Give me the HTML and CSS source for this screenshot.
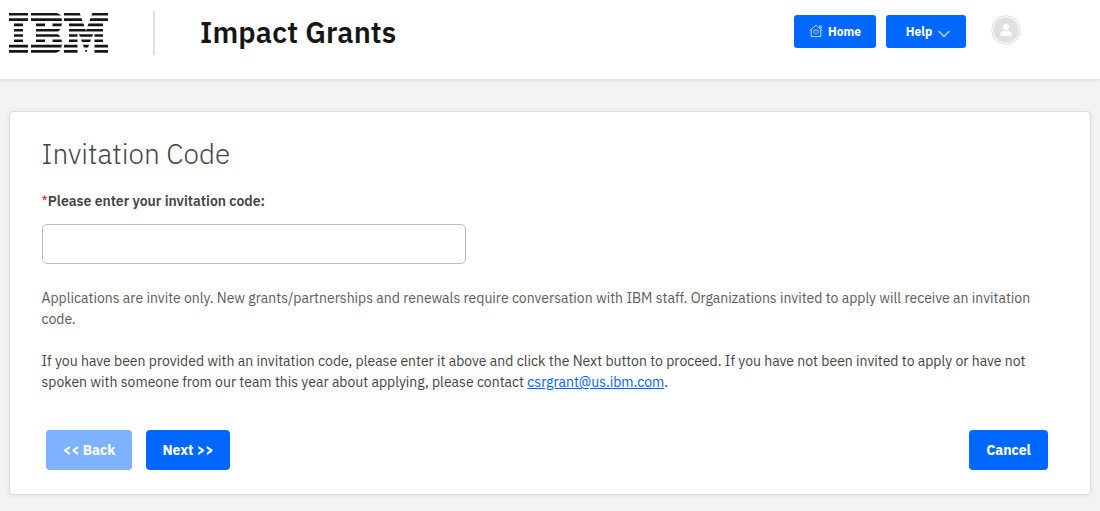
FILE: index.html
```html
<!DOCTYPE html>
<html lang="en">
<head>
<meta charset="utf-8">
<title>Impact Grants</title>
<link rel="stylesheet" href="styles.css">
</head>
<body>
<header class="topbar">
  <svg class="logo" viewBox="0 0 99 40" role="img" aria-label="IBM">
    <path d="M0 0h19v2.6H0zM0 5.3h19v2.6H0zM5 10.6h9v2.6H5zM5 15.9h9v2.6H5zM5 21.2h9v2.6H5zM5 26.5h9v2.6H5zM0 31.8h19v2.6H0zM0 37.1h19v2.6H0z"/>
    <path d="M22 0h25.500q3 .8 4.500 2.600H22zM22 5.300h30.500l.5 2.600H22zM27 10.600h9v2.600h-9zM43.500 10.600h9.500l-.7 2.600h-8.800zM27 15.900h24.500q-1 1.800-2.500 2.600H27zM27 21.200h22q1.500 1 2.500 2.600H27zM27 26.500h9v2.600h-9zM43.500 26.500h9l.5 2.600h-9.500zM22 31.800h31l-.8 2.600H22zM22 37.100h29.500q-1.500 2-4.500 2.600H22z"/>
    <path d="M55 0h15.700l.9 2.600H55zM99 0H83.300l-.9 2.600H99zM55 5.300h17.600l.9 2.600H55zM81.400 5.300H99v2.600H80.500zM60 10.600h14.500l.9 2.600H60zM79.500 10.600H94v2.600H78.600zM60 15.900h16.300l.7 1.800.7-1.800H94v2.600H60zM60 21.200h8.500v2.600H60zM70 21.200h14l-.9 2.600H70.900zM85.500 21.200H94v2.600h-8.500zM60 26.500h8.500v2.600H60zM72 26.500h10l-.9 2.600h-8.200zM85.500 26.500H94v2.600h-8.500zM55 31.800h13.500v2.600H55zM74 31.800h6l-.9 2.600h-4.200zM85.500 31.800H99v2.600H85.500zM55 37.100h13.500v2.600H55zM75.900 37.100h2.200l-1.100 2.600zM85.500 37.100H99v2.600H85.500z"/>
  </svg>
  <span class="divider"></span>
  <div class="brand">Impact Grants</div>
  <nav class="actions">
    <button class="btn btn-home"><svg class="home-icon" viewBox="0 0 14 14"><path d="M.7 6.600 7 1.200l6.300 5.400M2.200 5.600v7h9.600v-7M10.800 4V1.800h1.300v3.400M7 10.300 4.900 8.200a1.300 1.300 0 0 1 2.100-1.600 1.300 1.300 0 0 1 2.100 1.600z"/></svg>Home</button>
    <button class="btn btn-help">Help<svg class="chevron" viewBox="0 0 12 8"><path d="M.7 1 6 6.500 11.300 1"/></svg></button>
    <svg class="avatar" viewBox="0 0 30 30"><circle class="ring" cx="15" cy="15" r="14.300"/><circle class="disc" cx="15" cy="15" r="12.700"/><circle class="person" cx="15" cy="12" r="3.100"/><path class="person" d="M9.300 21v-1.600q0-3.200 3.200-3.200h5q3.200 0 3.200 3.200V21z"/></svg>
  </nav>
</header>
<main class="card">
  <h1 class="title">Invitation Code</h1>
  <label class="label" for="code"><span class="required">*</span>Please enter your invitation code:</label>
  <input class="field" id="code" type="text">
  <p class="text muted">Applications are invite only. New grants/partnerships and renewals require conversation with IBM staff. Organizations invited to apply will receive an invitation<br>code.</p>
  <p class="text">If you have been provided with an invitation code, please enter it above and click the Next button to proceed. If you have not been invited to apply or have not<br>spoken with someone from our team this year about applying, please contact <a class="link" href="#">csrgrant@us.ibm.com</a>.</p>
  <div class="footer">
    <button class="btn btn-back" disabled>&lt;&lt; Back</button>
    <button class="btn btn-next">Next &gt;&gt;</button>
    <button class="btn btn-cancel">Cancel</button>
  </div>
</main>
</body>
</html>
```
FILE: styles.css
```css
* { box-sizing: border-box; }
body { margin: 0; height: 511px; overflow: hidden; background: #f3f3f3; color: #444; font-family: "IBM Plex Sans", Roboto, "Liberation Sans", sans-serif; }
.topbar { display: flex; align-items: flex-start; height: 79px; background: #fff; box-shadow: 0 1px 4px rgba(0,0,0,.12); padding-left: 9px; }
.logo { width: 99px; height: 40px; margin-top: 13px; fill: #161616; }
.divider { width: 2px; height: 44px; margin: 11px 0 0 45px; background: #e0e0e0; }
.brand { margin: 14px 0 0 45px; width: 200px; font-size: 29px; line-height: 36px; font-weight: 600; color: #161616; letter-spacing: .15px; white-space: nowrap; }
.actions { display: flex; margin: 15px 79px 0 auto; }
.btn { display: flex; align-items: center; justify-content: center; border: 0; border-radius: 4px; padding: 0; background: #0068ff; color: #fff; font-family: inherit; font-size: 14px; font-weight: 700; white-space: nowrap; }
.btn-home, .btn-help { height: 33px; font-size: 12px; border-radius: 3px; }
.btn-home { width: 82px; gap: 5px; }
.btn-help { width: 80px; margin-left: 10px; padding-left: 4px; gap: 6px; }
.home-icon { width: 14px; height: 14px; margin-top: -2px; fill: none; stroke: #b8d5ff; stroke-width: 1; }
.chevron { width: 12px; height: 8px; margin-top: 4px; fill: none; stroke: #b8d5ff; stroke-width: 1.3; }
.avatar { width: 30px; height: 30px; margin-left: 25px; }
.ring { fill: #fff; stroke: #ddd; stroke-width: 1; }
.disc { fill: #e0e0e0; }
.person { fill: #fff; }
.card { margin: 32px 9px 0; height: 384px; padding: 24px 42px 0 32px; background: #fff; border: 1px solid #ddd; border-radius: 4px; box-shadow: 0 1px 4px rgba(0,0,0,.08); }
.title { margin: 0 0 0 -.5px; font-size: 28px; line-height: 36px; font-weight: 300; }
.label { display: block; margin: 19px 0 0 -.5px; font-size: 14px; line-height: 20px; font-weight: 600; white-space: nowrap; }
.required { color: #da1e28; font-weight: 400; }
.field { display: block; width: 424px; height: 40px; margin: 13px 0 0; border: 1px solid #bbb; border-radius: 5px; background: #fff; }
.text { margin: 24px 0 0 -.5px; font-size: 14px; line-height: 21px; color: #444; white-space: nowrap; }
.text + .text { margin-top: 21px; }
.muted { color: #5c5c5c; }
.link { color: #0062ff; text-decoration: underline; }
.footer { display: flex; margin: 37px 0 0 4px; }
.footer .btn { height: 40px; }
.btn-back { width: 86px; opacity: .5; }
.btn-next { width: 84px; margin-left: 14px; }
.footer .btn-cancel { width: 79px; margin-left: auto; }
```
